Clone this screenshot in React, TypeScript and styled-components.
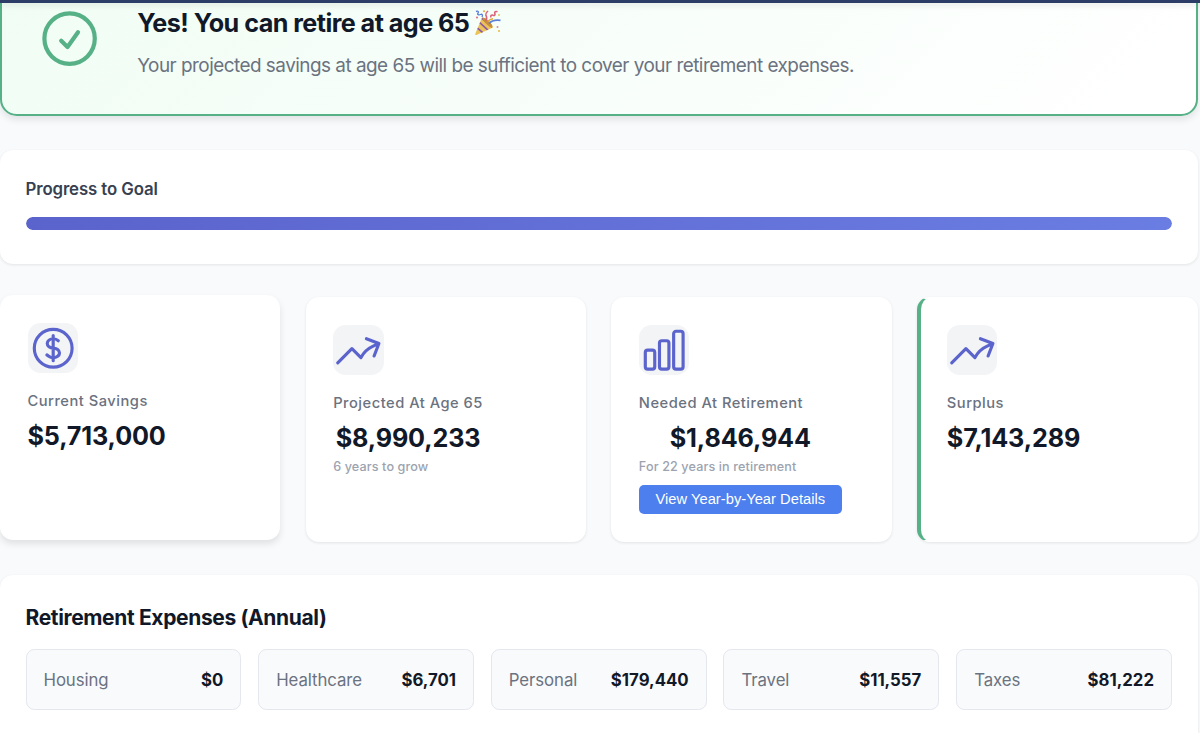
import React from "react";
import styled, { createGlobalStyle, css } from "styled-components";

const GlobalStyle = createGlobalStyle`
  * { box-sizing: border-box; }
  body {
    margin: 0;
    background: #f9fafc;
    font-family: Inter, "Liberation Sans", sans-serif;
    color: #111827;
    overflow: hidden;
  }
  h2, h3, p { margin: 0; }
`;

const Page = styled.div`
  width: 1200px;
  height: 733px;
  padding-right: 2.5px;
  overflow: hidden;
`;

const TopBar = styled.header`
  position: relative;
  z-index: 1;
  width: 1200px;
  height: 3px;
  background: #2b3c66;
  box-shadow: 0 2px 6px rgba(0, 0, 0, 0.13);
`;

const Main = styled.main`
  display: flex;
  flex-direction: column;
  gap: 33.6px;
`;

const Banner = styled.section`
  display: flex;
  align-items: center;
  height: 155px;
  margin-top: -42px;
  padding: 0 33px 0 34px;
  gap: 34px;
  border: 2px solid #56b186;
  border-radius: 16.8px;
  background: linear-gradient(135deg, #f0fdf4 0%, #ffffff 100%);
  box-shadow: 0 4px 7px rgba(0, 0, 0, 0.09);
  svg { color: #56b186; flex: none; }
`;

const BannerText = styled.div`
  display: flex;
  flex-direction: column;
  gap: 13px;
  padding-top: 11px;
`;

const BannerTitle = styled.h2`
  display: flex;
  align-items: center;
  gap: 4.5px;
  font-size: 25.2px;
  line-height: 30px;
  font-weight: 700;
  letter-spacing: -0.56px;
`;

const BannerCopy = styled.p`
  font-size: 18.9px;
  line-height: 30px;
  letter-spacing: -0.505px;
  color: #6b7280;
`;

const panel = css`
  background: #ffffff;
  border: 1px solid #ffffff;
  border-radius: 12.6px;
  box-shadow: 0 1px 3px rgba(0, 0, 0, 0.09);
`;

const ProgressPanel = styled.section`
  ${panel}
  height: 114px;
  padding: 25px 24.5px;
`;

const ProgressTitle = styled.h3`
  font-size: 16.8px;
  line-height: 27px;
  font-weight: 600;
  letter-spacing: -0.1px;
  color: #374151;
`;

const Track = styled.div`
  height: 12.6px;
  margin-top: 14.6px;
  border-radius: 7px;
  background: #e5e7eb;
  overflow: hidden;
`;

const Fill = styled.div`
  height: 100%;
  border-radius: 7px;
  background: linear-gradient(90deg, #5b63cc, #6a7de2);
`;

const StatGrid = styled.section`
  display: grid;
  grid-template-columns: repeat(4, 1fr);
  gap: 25.2px;
  margin-top: -0.2px;
`;

const StatCard = styled.article<{ $raised?: boolean; $accent?: boolean }>`
  ${panel}
  height: 244.5px;
  padding: 26.5px;
  ${(p) =>
    p.$raised &&
    css`
      transform: translateY(-2px);
      box-shadow: 0 4px 7px rgba(0, 0, 0, 0.1);
    `}
  ${(p) =>
    p.$accent &&
    css`
      border-left: 4.2px solid #56b186;
      padding-left: 25.8px;
    `}
`;

const IconTile = styled.div`
  display: flex;
  width: 50.4px;
  height: 50.4px;
  border-radius: 12.6px;
  background: #f3f4f6;
  color: #5b63cc;
`;

const StatBody = styled.div`
  width: fit-content;
  margin-top: 16.4px;
`;

const StatLabel = styled.div`
  font-size: 14.7px;
  line-height: 24px;
  font-weight: 450;
  letter-spacing: 0.5px;
  color: #6b7280;
`;

const StatValue = styled.div`
  margin-top: 3.8px;
  font-size: 25.2px;
  line-height: 38px;
  font-weight: 670;
  letter-spacing: -0.15px;
  text-align: center;
`;

const StatNote = styled.div`
  font-size: 12.6px;
  line-height: 20px;
  font-weight: 450;
  letter-spacing: 0.12px;
  color: #9ca3af;
`;

const DetailsButton = styled.button`
  display: block;
  width: 203px;
  height: 29.5px;
  margin-top: 7.6px;
  padding: 0 0 1px;
  border: 0;
  border-radius: 5px;
  background: #4d80ee;
  color: #ffffff;
  font: 14.7px "Liberation Sans", Arial, sans-serif;
  letter-spacing: 0.03px;
`;

const ExpensePanel = styled.section`
  ${panel}
  height: 200px;
  margin-top: -0.3px;
  padding: 25px 24.5px;
`;

const ExpenseTitle = styled.h3`
  font-size: 21px;
  line-height: 34px;
  font-weight: 650;
  letter-spacing: -0.36px;
`;

const ExpenseGrid = styled.div`
  display: grid;
  grid-template-columns: repeat(5, 1fr);
  gap: 16.8px;
  margin-top: 14px;
`;

const ExpenseItem = styled.div`
  display: flex;
  align-items: center;
  justify-content: space-between;
  height: 61px;
  padding: 1px 17px 0;
  border: 1px solid #e5e7ef;
  border-radius: 8.4px;
  background: #f9fafc;
  font-size: 16.8px;
`;

const ExpenseName = styled.span`
  letter-spacing: -0.08px;
  color: #6b7280;
`;

const ExpenseAmount = styled.span`
  font-weight: 650;
`;

const PATHS = {
  check: "M9 12.75L11.25 15 15 9.75M21 12a9 9 0 11-18 0 9 9 0 0118 0z",
  dollar:
    "M12 6v12m-3-2.818l.879.659c1.171.879 3.07.879 4.242 0 1.172-.879 1.172-2.303 0-3.182C13.536 12.219 12.768 12 12 12c-.725 0-1.45-.22-2.003-.659-1.106-.879-1.106-2.303 0-3.182s2.9-.879 4.006 0l.415.33M21 12a9 9 0 11-18 0 9 9 0 0118 0z",
  trend:
    "M2.25 18L9 11.25l4.306 4.306a11.95 11.95 0 015.814-5.518l2.74-1.22m0 0l-5.94-2.281m5.94 2.28l-2.28 5.941",
  bars:
    "M3 13.125C3 12.504 3.504 12 4.125 12h2.25c.621 0 1.125.504 1.125 1.125v6.75C7.5 20.496 6.996 21 6.375 21h-2.25A1.125 1.125 0 013 19.875v-6.75zM9.75 8.625c0-.621.504-1.125 1.125-1.125h2.25c.621 0 1.125.504 1.125 1.125v11.25c0 .621-.504 1.125-1.125 1.125h-2.25a1.125 1.125 0 01-1.125-1.125V8.625zM16.5 4.125c0-.621.504-1.125 1.125-1.125h2.25C20.496 3 21 3.504 21 4.125v15.75c0 .621-.504 1.125-1.125 1.125h-2.25a1.125 1.125 0 01-1.125-1.125V4.125z",
};

type IconName = keyof typeof PATHS;

function Icon({ name, size }: { name: IconName; size: number }) {
  return (
    <svg width={size} height={size} viewBox="0 0 24 24" fill="none" stroke="currentColor" strokeWidth={1.5} strokeLinecap="round" strokeLinejoin="round">
      <path d={PATHS[name]} />
    </svg>
  );
}

function PartyPopper() {
  return (
    <svg width="28" height="28" viewBox="0 0 28 28" fill="none">
      <path d="M8 8.500L1.300 24.700c-.3.9.3 1.500 1.200 1.200L19 18.500C18 14 12.500 8.500 8 8.500z" fill="#ecc25a" />
      <path d="M6.200 13l8.300 7.500-1.700.8-7.300-6.700zM4 18.400l5.300 4.500-1.700.8-4.300-3.700zM8.500 8.600l9.500 8-.3 2.400L7.500 10z" fill="#8c5aa0" />
      <ellipse cx="13.500" cy="13.500" rx="1.900" ry="6.600" transform="rotate(-46 13.500 13.500)" fill="#c98f3a" />
      <path d="M2 2.500c2-1 3 .3 2 1.700s.8 2.200 2.500 1.300 2.500.8 1.500 2.500" stroke="#5b80d8" strokeWidth="1.400" />
      <path d="M11.500 12c2.500-3 .8-4.500.3-6s1-2.700 2.200-4" stroke="#d9637c" strokeWidth="1.500" />
      <path d="M17 8.500c-.8-2 .5-3 2-2.300s2.500-.3 1.800-1.800.8-2.400 2.700-1.600" stroke="#d9637c" strokeWidth="1.600" />
      <path d="M15 14.500c3-3.500 6-4 11.500-3.200" stroke="#5b80d8" strokeWidth="1.800" />
      <path d="M14 12.500c1.500-2 3-2.500 5-2.800" stroke="#e3a735" strokeWidth="1.400" />
      <circle cx="10" cy="2.300" r="1" fill="#e3a735" />
      <circle cx="3" cy="8.500" r="1" fill="#d9637c" />
      <circle cx="23.500" cy="18" r="1" fill="#e08a9a" />
      <circle cx="25" cy="22" r="1.100" fill="#e3c04f" />
      <circle cx="25" cy="6" r=".9" fill="#e3c04f" />
    </svg>
  );
}

interface Stat {
  icon: IconName;
  label: string;
  value: string;
  note?: string;
  action?: string;
  raised?: boolean;
  accent?: boolean;
}

const stats: Stat[] = [
  { icon: "dollar", label: "Current Savings", value: "$5,713,000", raised: true },
  { icon: "trend", label: "Projected At Age 65", value: "$8,990,233", note: "6 years to grow" },
  { icon: "bars", label: "Needed At Retirement", value: "$1,846,944", note: "For 22 years in retirement", action: "View Year-by-Year Details" },
  { icon: "trend", label: "Surplus", value: "$7,143,289", accent: true },
];

const expenses = [
  ["Housing", "$0"],
  ["Healthcare", "$6,701"],
  ["Personal", "$179,440"],
  ["Travel", "$11,557"],
  ["Taxes", "$81,222"],
];

export default function App() {
  const progress = 100;
  return (
    <Page>
      <GlobalStyle />
      <TopBar />
      <Main>
        <Banner>
          <Icon name="check" size={67.2} />
          <BannerText>
            <BannerTitle>
              Yes! You can retire at age 65
              <PartyPopper />
            </BannerTitle>
            <BannerCopy>Your projected savings at age 65 will be sufficient to cover your retirement expenses.</BannerCopy>
          </BannerText>
        </Banner>
        <ProgressPanel>
          <ProgressTitle>Progress to Goal</ProgressTitle>
          <Track>
            <Fill style={{ width: `${progress}%` }} />
          </Track>
        </ProgressPanel>
        <StatGrid>
          {stats.map((s) => (
            <StatCard key={s.label} $raised={s.raised} $accent={s.accent}>
              <IconTile>
                <Icon name={s.icon} size={50.4} />
              </IconTile>
              <StatBody>
                <StatLabel>{s.label}</StatLabel>
                <StatValue>{s.value}</StatValue>
                {s.note && <StatNote>{s.note}</StatNote>}
                {s.action && <DetailsButton>{s.action}</DetailsButton>}
              </StatBody>
            </StatCard>
          ))}
        </StatGrid>
        <ExpensePanel>
          <ExpenseTitle>Retirement Expenses (Annual)</ExpenseTitle>
          <ExpenseGrid>
            {expenses.map(([name, amount]) => (
              <ExpenseItem key={name}>
                <ExpenseName>{name}</ExpenseName>
                <ExpenseAmount>{amount}</ExpenseAmount>
              </ExpenseItem>
            ))}
          </ExpenseGrid>
        </ExpensePanel>
      </Main>
    </Page>
  );
}
